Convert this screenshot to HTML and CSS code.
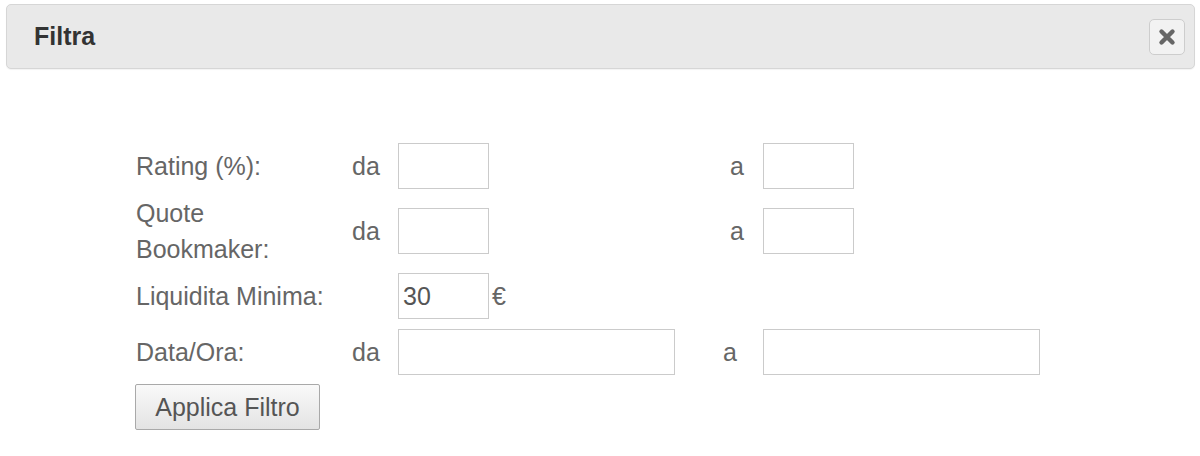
FILE: index.html
```html
<!DOCTYPE html>
<html>
<head>
  <title>Filtra</title>
  <link rel="stylesheet" href="styles.css">
</head>
<body>

<div class="modal-header">
  <h3>Filtra</h3>
  <button class="close" title="Chiudi">
    <svg width="18" height="18" viewBox="0 0 18 18">
      <path d="M3.5 3.5 L14.5 14.5 M14.5 3.5 L3.5 14.5" stroke="#666" stroke-width="4.4" stroke-linecap="round" fill="none"/>
    </svg>
  </button>
</div>

<form class="filter">

  <!-- Rating -->
  <div class="row">
    <label class="lbl">Rating (%):</label>
    <span class="da">da</span>
    <div class="cell"><input type="text" class="small"></div>
    <span class="a">a</span>
    <div class="cell"><input type="text" class="small"></div>
  </div>

  <!-- Quote -->
  <div class="row tall">
    <label class="lbl">Quote Bookmaker:</label>
    <span class="da">da</span>
    <div class="cell"><input type="text" class="small"></div>
    <span class="a">a</span>
    <div class="cell"><input type="text" class="small"></div>
  </div>

  <!-- Liquidita -->
  <div class="row">
    <label class="lbl wide">Liquidita Minima:</label>
    <div class="cell"><input type="text" class="small" value="30"><span class="euro">€</span></div>
  </div>

  <!-- Data -->
  <div class="row spaced">
    <label class="lbl">Data/Ora:</label>
    <span class="da">da</span>
    <div class="cell"><input type="text" class="large"></div>
    <span class="a left">a</span>
    <div class="cell"><input type="text" class="large"></div>
  </div>

  <div class="actions">
    <button type="button" class="apply">Applica Filtro</button>
  </div>

</form>

</body>
</html>
```

FILE: styles.css
```css
body {
  font-family: 'Liberation Sans', Arial, sans-serif;
  margin: 0;
  padding: 0;
  background: #fff;
  color: #666;
}

.modal-header {
  margin: 4px 5px 0 6px;
  height: 63px;
  background: #e9e9e9;
  border: 1px solid #d6d6d6;
  border-radius: 5px;
  display: flex;
  align-items: center;
  justify-content: space-between;
  padding: 0 9px 0 27px;
  box-shadow: 0 1px 1px rgba(0,0,0,0.05);
}

.modal-header h3 {
  margin: 0;
  font-size: 25px;
  font-weight: bold;
  color: #333;
}

.close {
  width: 36px;
  height: 36px;
  padding: 0;
  border: 1px solid #cdcdcd;
  border-radius: 5px;
  background: #f2f2f2;
  display: flex;
  align-items: center;
  justify-content: center;
  cursor: pointer;
}

.filter {
  padding: 74px 0 0 136px;
}

.row {
  display: grid;
  grid-template-columns: 216px 46px 325px 40px 1fr;
  align-items: center;
  min-height: 46px;
  font-size: 25px;
  line-height: 36px;
  margin-bottom: 6px;
}

.row.tall {
  min-height: 72px;
}

.row.spaced {
  margin-top: 10px;
  margin-bottom: 9px;
}

.lbl {
  max-width: 200px;
}

.lbl.wide {
  grid-column: span 2;
}

.cell {
  display: flex;
  align-items: center;
  gap: 3px;
}

.a {
  padding-left: 7px;
}

.a.left {
  padding-left: 0;
}

input[type="text"] {
  box-sizing: border-box;
  height: 46px;
  border: 1px solid #cbcbcb;
  background: #fff;
  font-family: inherit;
  font-size: 25px;
  color: #555;
  padding: 0 4px;
  margin: 0;
}

input.small {
  width: 91px;
}

input.large {
  width: 277px;
}

.euro {
  color: #666;
}

.apply {
  width: 185px;
  height: 46px;
  border: 1px solid #a9a9a9;
  border-radius: 2px;
  background: linear-gradient(#f9f9f9, #e3e3e3);
  font-family: inherit;
  font-size: 25px;
  color: #555;
  padding: 0;
  margin-left: -1px;
}
```
